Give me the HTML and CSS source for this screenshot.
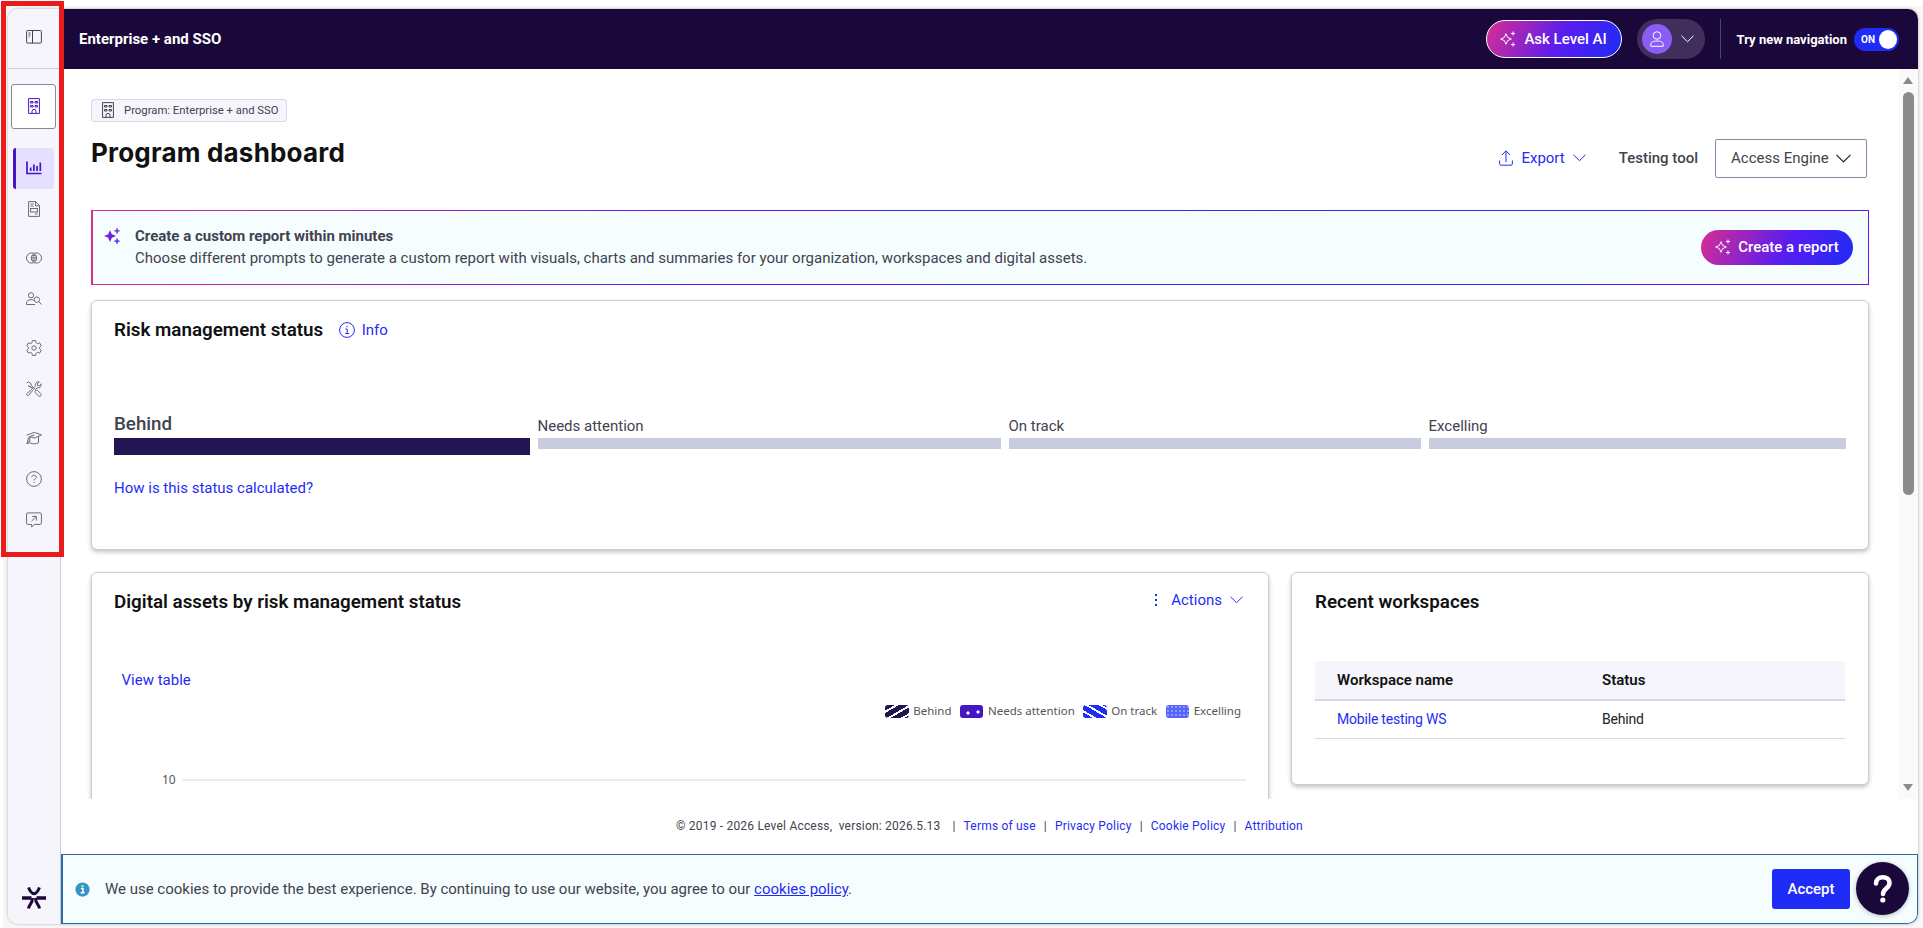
FILE: index.html
```
<!DOCTYPE html>
<html lang="en">
<head>
    <meta charset="UTF-8">
    <meta name="viewport" content="width=device-width, initial-scale=1.0">
    <title>Program dashboard</title>
    <link rel="stylesheet" href="styles.css">
</head>
<body>
    <div class="page">
        <div class="window">
            <nav class="sidebar">
                <button class="side-toggle">
                    <svg class="icon dark" viewBox="0 0 16 16"><rect x=".6" y="1.5" width="14.8" height="12.6" rx="1"/><path d="M6.5 1.5v12.6M2.5 4h2M2.5 6h2M2.5 8h1"/></svg>
                </button>
                <a class="side-program" href="#">
                    <svg class="icon purple" viewBox="0 0 16 16"><path d="M2.6.6h10.8v14.8H2.6zM6 15.4v-2a2 2 0 0 1 4 0v2"/><path d="M4.5 3.5h2.5v1.5H4.5zM9 3.5h2.5v1.5H9zM4.5 7.5h2.5v1.5H4.5zM9 7.5h2.5v1.5H9z"/></svg>
                </a>
                <div class="side-group">
                    <a class="side-item active" href="#">
                        <svg class="icon purple" viewBox="0 0 16 16"><path class="thick" d="M1 1.5v12h14.5"/><path class="thick" d="M4.7 11V7.5M7.9 11V4.5M11.1 11V6M14.3 11V2.5"/></svg>
                    </a>
                    <a class="side-item" href="#">
                        <svg class="icon" viewBox="0 0 16 16"><path d="M2.6.6h7l3.9 4v10.8H2.6zM9.5.6v4.2h4M4.5 3h3M4.5 5h3M9 13h2.5"/><rect x="4.6" y="7.5" width="6.8" height="3.5"/></svg>
                    </a>
                </div>
                <div class="side-group">
                    <a class="side-item" href="#">
                        <svg class="icon" viewBox="0 0 16 16"><circle cx="5.6" cy="8" r="5.1"/><circle cx="10.4" cy="8" r="5.1"/><path d="M6.3 5.5h3.4M5.5 7.2h5M5.5 8.9h5M6.3 10.6h3.4"/></svg>
                    </a>
                    <a class="side-item" href="#">
                        <svg class="icon" viewBox="0 0 16 16"><circle cx="5" cy="4.3" r="2.6"/><path d="M8 13.5H.6v-1.8c0-2 1.7-3 4.4-3 1 0 2 .2 2.7.6M9 13.5H8"/><circle cx="10.8" cy="8.6" r="2.7"/><path d="M12.8 10.6l2.7 2.9"/></svg>
                    </a>
                </div>
                <div class="side-group">
                    <a class="side-item" href="#">
                        <svg class="icon" viewBox="0 0 16 16"><circle cx="8" cy="8" r="2.2"/><path d="M6.4.6h3.2l.5 2.2 1.4.8 2.1-.7 1.6 2.8L13.6 7.2v1.6l1.6 1.5-1.6 2.8-2.1-.7-1.4.8-.5 2.2H6.4l-.5-2.2-1.4-.8-2.1.7L.8 10.3l1.6-1.5V7.2L.8 5.7l1.6-2.8 2.1.7 1.4-.8z"/></svg>
                    </a>
                    <a class="side-item" href="#">
                        <svg class="icon" viewBox="0 0 16 16"><path d="M.8 2.2L2.2.8l2.6 1.6.5 2 4.5 4.4M7.3 7.8L4.2 5.4l-1.9-.5zM9.2 9.8c1.2-1 2-.8 2.8 0l2.7 2.7c1.5 1.5-.8 3.8-2.3 2.3L9.7 12c-.8-.8-1-1.6-.5-2.2zM8.3 6.3l1-1.2C8.8 2.4 10.8.3 13.3.8l-2 2.2.3 1.5 1.6.3 1.9-2c.6 2.7-1.4 4.5-3.8 4L9.8 8M7.2 8.7l-4.6 5.8c-.8.9-2.6-.8-1.7-1.7L6 7.7"/></svg>
                    </a>
                </div>
                <div class="side-group">
                    <a class="side-item" href="#">
                        <svg class="icon" viewBox="0 0 16 16"><path d="M.6 5.2L8.5 2.3l6.9 2.6-6.9 3.2-4.8-1.5L8.5 5M3.7 6.8v6c2.5 1.4 6 1.4 8.8 0V6.4M3.7 6.6q-1.8.6-1.9 4.4M1.8 10.8l-1 2.8h1.6z"/></svg>
                    </a>
                    <a class="side-item" href="#">
                        <svg class="icon" viewBox="0 0 16 16"><circle cx="8" cy="8" r="7.4"/><path d="M5.7 6.2C5.7 3.7 10.3 3.7 10.3 6.2c0 1.7-2.3 1.6-2.3 3.3M8 10.9v1.1"/></svg>
                    </a>
                    <a class="side-item" href="#">
                        <svg class="icon" viewBox="0 0 16 16"><path d="M1.6.9h12.8q1 0 1 1v9.5q0 1-1 1H8.5L5.7 15v-2.6H1.6q-1 0-1-1V1.9q0-1 1-1zM5.5 9.2l4.7-4.6M6.2 4.4h4.2v4.2"/></svg>
                    </a>
                </div>
                <svg class="brand" viewBox="0 0 24 22"><path class="bars" d="M0 11h9.5M14.5 11H24"/><path d="M6.5.5C8 4.2 9.6 6.7 12 6.7S16 4.2 17.5.5M6.5 21.5c.8-4.5 4-5 4-10.500M17.500 21.500c-.8-4.500-4-5-4-10.500"/></svg>
            </nav>

            <div class="main">
                <header class="topbar">
                    <span class="org">Enterprise + and SSO</span>
                    <button class="ask">
                        <svg class="icon light" viewBox="0 0 16 16"><path d="M6 2.7l1.6 3.7L11.3 8 7.6 9.6 6 13.3 4.4 9.6.7 8l3.7-1.6zM13 .5v4M11 2.5h4M13 11.5v4M11 13.5h4"/></svg>
                        Ask Level AI
                    </button>
                    <button class="account">
                        <span class="avatar"><svg class="icon light" viewBox="0 0 16 16"><circle cx="8" cy="4.5" r="3.8"/><path d="M1.8 15.3v-1.8c0-2.7 2.7-3.5 6.2-3.5s6.2.8 6.2 3.5v1.8z"/></svg></span>
                        <svg class="chevron light" viewBox="0 0 13 8"><path d="M.5.8l6 5.9 6-5.9"/></svg>
                    </button>
                    <div class="new-nav">
                        <span>Try new navigation</span>
                        <span class="switch">ON<i></i></span>
                    </div>
                </header>

                <div class="content">
                    <div class="scroll">
                        <div class="crumb">
                            <svg class="icon dark" viewBox="0 0 16 16"><path d="M2.6.6h10.8v14.8H2.6zM6 15.4v-2a2 2 0 0 1 4 0v2"/><path d="M4.5 3.5h2.5v1.5H4.5zM9 3.5h2.5v1.5H9zM4.5 7.5h2.5v1.5H4.5zM9 7.5h2.5v1.5H9z"/></svg>
                            Program: Enterprise + and SSO
                        </div>
                        <div class="title-row">
                            <h1>Program dashboard</h1>
                            <button class="export">
                                <svg class="icon blue" viewBox="0 0 16 16"><path d="M1.6 10.5v3.2q0 1.5 1.5 1.5h9.8q1.5 0 1.5-1.5v-3.2M8 12V1M4 5l4-4.2L12 5"/></svg>
                                Export
                                <svg class="chevron blue" viewBox="0 0 13 8"><path d="M.5.8l6 5.9 6-5.9"/></svg>
                            </button>
                            <span class="tool-label">Testing tool</span>
                            <button class="select">
                                Access Engine
                                <svg class="chevron" viewBox="0 0 15 9"><path d="M.5.8l7 7 7-7"/></svg>
                            </button>
                        </div>

                        <section class="banner">
                            <svg class="spark" viewBox="0 0 16 16">
                                <defs><linearGradient id="g" x1="0" y1="0" x2="1" y2="1"><stop offset="0" stop-color="#d72e92"/><stop offset=".55" stop-color="#5a1cf0"/><stop offset="1" stop-color="#1f2cf5"/></linearGradient></defs>
                                <path fill="url(#g)" d="M6 2l1.8 4.2L12 8 7.8 9.8 6 14 4.2 9.8 0 8l4.2-1.8zM12.3.3h1.4v1.9h1.9v1.4h-1.9v1.9h-1.4V3.6h-1.9V2.2h1.9zM12.3 10.5h1.4v1.9h1.9v1.4h-1.9v1.9h-1.4v-1.9h-1.9v-1.4h1.9z"/>
                            </svg>
                            <div class="banner-text">
                                <strong>Create a custom report within minutes</strong>
                                <p>Choose different prompts to generate a custom report with visuals, charts and summaries for your organization, workspaces and digital assets.</p>
                            </div>
                            <button class="create">
                                <svg class="icon light" viewBox="0 0 16 16"><path d="M6 2.7l1.6 3.7L11.3 8 7.6 9.6 6 13.3 4.4 9.6.7 8l3.7-1.6zM13 .5v4M11 2.5h4M13 11.5v4M11 13.5h4"/></svg>
                                Create a report
                            </button>
                        </section>

                        <section class="card risk">
                            <div class="card-head">
                                <h2>Risk management status</h2>
                                <a class="info" href="#">
                                    <svg class="icon blue" viewBox="0 0 16 16"><circle cx="8" cy="8" r="7.4"/><path d="M6.5 7h1.7v4.5M6.3 11.5h3.7M8 4v1.3"/></svg>
                                    Info
                                </a>
                            </div>
                            <div class="levels">
                                <div class="level current"><span>Behind</span></div>
                                <div class="level"><span>Needs attention</span></div>
                                <div class="level"><span>On track</span></div>
                                <div class="level"><span>Excelling</span></div>
                            </div>
                            <a class="how" href="#">How is this status calculated?</a>
                        </section>

                        <div class="columns">
                            <section class="card assets">
                                <div class="card-head">
                                    <h2>Digital assets by risk management status</h2>
                                    <button class="actions">
                                        <svg class="dots" viewBox="0 0 4 12"><path d="M1 0h2v2H1zM1 5h2v2H1zM1 10h2v2H1z"/></svg>
                                        Actions
                                        <svg class="chevron blue" viewBox="0 0 13 8"><path d="M.5.8l6 5.9 6-5.9"/></svg>
                                    </button>
                                </div>
                                <a class="view-table" href="#">View table</a>
                                <div class="legend">
                                    <span><i class="swatch behind"></i>Behind</span>
                                    <span><i class="swatch attention"></i>Needs attention</span>
                                    <span><i class="swatch track"></i>On track</span>
                                    <span><i class="swatch excelling"></i>Excelling</span>
                                </div>
                                <div class="axis"><span>10</span><i></i></div>
                            </section>

                            <section class="card recent">
                                <h2>Recent workspaces</h2>
                                <table>
                                    <thead>
                                        <tr><th>Workspace name</th><th>Status</th></tr>
                                    </thead>
                                    <tbody>
                                        <tr><td><a href="#">Mobile testing WS</a></td><td>Behind</td></tr>
                                    </tbody>
                                </table>
                            </section>
                        </div>
                    </div>
                    <div class="scrollbar">
                        <i class="arrow up"></i>
                        <i class="thumb"></i>
                        <i class="arrow down"></i>
                    </div>
                </div>

                <footer>
                    <span>© 2019 - 2026 Level Access,&nbsp; version: 2026.5.13</span>
                    <b class="first">|</b><a href="#">Terms of use</a>
                    <b>|</b><a href="#">Privacy Policy</a>
                    <b>|</b><a href="#">Cookie Policy</a>
                    <b>|</b><a href="#">Attribution</a>
                </footer>

                <div class="cookies">
                    <svg class="cookie-icon" viewBox="0 0 16 16"><circle cx="8" cy="8" r="7.6"/><path d="M6.3 7h2.2v4.3M6 11.5h4.2M8 3.4v2"/></svg>
                    <p>We use cookies to provide the best experience. By continuing to use our website, you agree to our <a href="#">cookies policy</a>.</p>
                    <button class="accept">Accept</button>
                    <button class="help"><svg viewBox="0 0 20 30"><path d="M3 9.5C3 1.2 16.5 1 16.5 9c0 5.5-6.5 5.5-6.5 11"/><circle cx="9.8" cy="26" r="2.6"/></svg></button>
                </div>
            </div>
        </div>
    </div>
    <div class="highlight"></div>
</body>
</html>
```
FILE: styles.css
```
* {
    box-sizing: border-box;
}

body {
    margin: 0;
    padding: 6px 0 0 3px;
    height: 928px;
    overflow: hidden;
    background: #fff;
    color: #43424f;
    font-family: Roboto, "Liberation Sans", sans-serif;
    font-size: 15px;
}

h1, h2, p {
    margin: 0;
}

a {
    color: #1f2cf5;
    text-decoration: none;
}

button {
    display: flex;
    align-items: center;
    padding: 0;
    border: none;
    background: none;
    color: inherit;
    font: inherit;
    white-space: nowrap;
}

.icon {
    width: 16px;
    height: 16px;
    flex: none;
    fill: none;
    stroke: #6b697f;
    stroke-width: 1;
}

.icon .thick {
    stroke-width: 1.7;
}

.chevron {
    width: 13px;
    height: 8px;
    fill: none;
    stroke: #222;
    stroke-width: 1;
}

.icon.dark { stroke: #43424f; }
.icon.purple { stroke: #4416c4; }
.icon.light, .chevron.light { stroke: #fff; }
.icon.blue, .chevron.blue { stroke: #1f2cf5; }

.page {
    height: 922px;
    padding: 3px 5px 4px 5px;
    background: #f7f7f7;
}

.window {
    display: flex;
    height: 915px;
    border-radius: 10px;
    overflow: hidden;
    background: #fff;
    box-shadow: 0 0 3px rgba(0, 0, 0, 0.3);
}

/* sidebar */
.sidebar {
    display: flex;
    flex-direction: column;
    align-items: center;
    width: 53px;
    flex: none;
    padding-right: 1px;
    background: #f6f5fb;
    border-right: 1px solid #c9cbdf;
}

.side-toggle {
    width: 100%;
    height: 60px;
    flex: none;
    justify-content: center;
    padding-bottom: 4px;
    border-bottom: 1px solid #c9cbdf;
}

.side-program {
    display: flex;
    align-items: center;
    justify-content: center;
    width: 45px;
    height: 45px;
    margin: 15px 0 18.5px;
    padding-bottom: 2px;
    background: #fff;
    border: 1px solid #8986a5;
    border-radius: 3px;
}

.side-group {
    margin-bottom: 7.6px;
}

.side-item {
    display: flex;
    align-items: center;
    justify-content: center;
    width: 41px;
    height: 41.2px;
    padding-bottom: 1px;
    border-radius: 3px;
}

.side-item.active {
    background: #e6dfff;
    border-left: 3px solid #4416c4;
    padding-right: 3px;
}

.brand {
    width: 24px;
    height: 22px;
    margin: auto 0 15px;
    fill: none;
    stroke: #1b083a;
    stroke-width: 3;
}

.brand .bars {
    stroke-width: 3.6;
}

.main {
    display: flex;
    flex-direction: column;
    flex: 1;
    min-width: 0;
}

/* top bar */
.topbar {
    display: flex;
    align-items: center;
    height: 60px;
    padding: 0 19px 0 18px;
    background: #1b083a;
    color: #fff;
    font-weight: 500;
}

.org {
    flex: 1;
    font-size: 15px;
    font-weight: 700;
}

.ask {
    width: 136px;
    height: 38px;
    justify-content: center;
    gap: 8px;
    border: 1px solid #fff;
    border-radius: 19px;
    background: linear-gradient(115deg, #d72e92 0%, #5a1cf0 55%, #1f2cf5 100%);
    font-size: 15px;
}

.account {
    width: 68px;
    height: 40px;
    margin: 0 15px;
    padding-left: 5px;
    gap: 9px;
    border-radius: 20px;
    background: #402e5c;
}

.avatar {
    display: flex;
    align-items: center;
    justify-content: center;
    width: 30px;
    height: 30px;
    padding-left: 1px;
    border-radius: 50%;
    background: #8b5cf6;
}

.new-nav {
    display: flex;
    align-items: center;
    gap: 7px;
    height: 40px;
    padding-left: 16px;
    border-left: 1px solid #524463;
    font-size: 13px;
    font-weight: 700;
}

.switch {
    display: flex;
    align-items: center;
    justify-content: space-between;
    width: 45px;
    height: 23px;
    padding: 0 2px 0 7px;
    border-radius: 12px;
    background: #1f2cf5;
    font-size: 10px;
}

.switch i {
    width: 18px;
    height: 19px;
    border-radius: 50%;
    background: #fff;
}

/* scrolling area */
.content {
    display: flex;
    height: 730px;
}

.scroll {
    flex: 1;
    min-width: 0;
    padding: 30px 30px 0;
    overflow: hidden;
}

.scrollbar {
    display: flex;
    flex-direction: column;
    align-items: center;
    width: 19px;
    padding: 8px 1px 8px 0;
    background: #fafafa;
}

.arrow {
    border: 5px solid transparent;
}

.arrow.up {
    border-top: none;
    border-bottom: 7px solid #8b8b8b;
}

.arrow.down {
    margin-top: auto;
    border-bottom: none;
    border-top: 7px solid #8b8b8b;
}

.thumb {
    width: 11px;
    height: 403px;
    margin-top: 8px;
    border-radius: 6px;
    background: #8b8b8b;
}

.crumb {
    display: flex;
    align-items: center;
    gap: 8px;
    width: 196px;
    height: 23px;
    padding: 0 0 1px 8px;
    border: 1px solid #d6d6e4;
    border-radius: 3px;
    background: #f6f5fb;
    font-size: 11.3px;
    white-space: nowrap;
}

.title-row {
    display: flex;
    align-items: center;
    height: 88px;
    padding: 0 2px 16px 0;
}

h1 {
    flex: 1;
    margin-top: -11px;
    color: #111;
    font-family: Inter, Roboto, sans-serif;
    font-size: 26px;
    font-weight: 700;
    letter-spacing: 0.2px;
}

.export {
    gap: 8px;
    color: #1f2cf5;
}

.export .icon {
    margin-right: -1px;
}

.tool-label {
    margin: 0 17px 0 33px;
    font-weight: 500;
}

.select {
    width: 152px;
    height: 39px;
    justify-content: space-between;
    padding: 0 15px;
    border: 1px solid #8986a5;
    border-radius: 2px;
}

.select .chevron {
    width: 15px;
    height: 9px;
    stroke-width: 1.2;
}

.banner {
    display: flex;
    height: 75px;
    padding: 17px 15px 0 11px;
    border: 1px solid;
    border-left-width: 2px;
    border-image: linear-gradient(90deg, #d72e92, #5a1cf0 33%, #1f2cf5 66%, #5a1cf0) 1;
    background: #f5fdff;
}

.spark {
    width: 16px;
    height: 16px;
}

.banner-text {
    flex: 1;
    margin-left: 15px;
    line-height: 22px;
    margin-top: -3px;
}

.banner-text strong {
    font-weight: 700;
}

.create {
    width: 152px;
    height: 35px;
    margin-top: 2px;
    padding-bottom: 2px;
    justify-content: center;
    gap: 7px;
    border-radius: 18px;
    background: linear-gradient(115deg, #d72e92 0%, #5a1cf0 55%, #1f2cf5 100%);
    color: #fff;
    font-weight: 500;
}

.card {
    border: 1px solid #c9cbdf;
    border-radius: 6px;
    background: #fff;
    box-shadow: 0 2px 4px rgba(0, 0, 0, 0.25);
}

.card-head {
    display: flex;
    align-items: center;
}

h2 {
    color: #111;
    font-size: 18.8px;
    line-height: 24px;
    font-weight: 600;
}

.risk {
    height: 250px;
    margin-top: 15px;
    padding: 17px 22px 0;
}

.info {
    display: flex;
    align-items: center;
    gap: 7px;
    margin-left: 15.5px;
}

.levels {
    display: grid;
    grid-template-columns: 416px 463.5px 412.5px 417px;
    gap: 7.5px;
    margin-top: 71px;
}

.level span {
    display: flex;
    align-items: flex-end;
    height: 25px;
    padding-bottom: 3px;
}

.level::after {
    content: "";
    display: block;
    height: 11px;
    background: #c9cbdf;
}

.level.current span {
    font-size: 18.75px;
    font-weight: 500;
}

.level.current::after {
    height: 17px;
    background: #231452;
}

.how {
    display: block;
    margin-top: 24px;
}

.columns {
    display: grid;
    grid-template-columns: 1178px 578px;
    gap: 22px;
    margin-top: 22px;
    align-items: start;
}

.assets {
    height: 300px;
    padding: 17px 22px 0;
}

.assets h2 {
    flex: 1;
}

.actions {
    gap: 9px;
    padding: 0 3px 4px 0;
    color: #1f2cf5;
}

.actions .chevron {
    margin-left: -1px;
}

.dots {
    width: 4px;
    height: 12px;
    margin-right: 4px;
    fill: #1f2cf5;
}

.view-table {
    display: block;
    margin: 56px 0 0 7.5px;
    line-height: 20px;
}

.legend {
    display: flex;
    justify-content: flex-end;
    gap: 8.5px;
    margin: 13px 5px 0 0;
    font-family: "Noto Sans", sans-serif;
    font-size: 11.5px;
    line-height: 16px;
    color: #555;
}

.legend span {
    display: flex;
    align-items: center;
    gap: 4.5px;
}

.swatch {
    width: 23.5px;
    height: 13px;
    border-radius: 3px;
}

.swatch.behind {
    background: repeating-linear-gradient(150deg, #231452 0 5px, #fff 5px 7px);
}

.swatch.attention {
    background:
        radial-gradient(circle at 8px 8px, #fff 1.3px, transparent 1.9px),
        radial-gradient(circle at 18px 7px, #fff 1.3px, transparent 1.9px),
        #4416c4;
}

.swatch.track {
    background: repeating-linear-gradient(30deg, #1f2cf5 0 5px, #fff 5px 7px);
}

.swatch.excelling {
    background: radial-gradient(circle at 2px 2px, #b9beff 0.5px, transparent 1px) 0 0 / 4px 4px #5664fb;
}

.axis {
    display: flex;
    align-items: center;
    gap: 7px;
    margin: 53px 0 0 48px;
    font-family: "Noto Sans", sans-serif;
    font-size: 12px;
    line-height: 16px;
    color: #555;
}

.axis i {
    width: 1063px;
    height: 2px;
    background: #e9e9f0;
}

.recent {
    height: 213px;
    padding: 17px 23px 0;
}

table {
    width: 530px;
    margin-top: 47px;
    border-collapse: separate;
    border-spacing: 0;
    table-layout: fixed;
}

th, td {
    height: 38px;
    padding: 0 22px;
    text-align: left;
    border-bottom: 1px solid #d6d6e8;
    color: #222;
}

td {
    padding-bottom: 1px;
    font-size: 14px;
    letter-spacing: -0.2px;
}

th {
    height: 40px;
    border-bottom-width: 2px;
    background: #f6f5fb;
    color: #111;
    font-size: 15px;
    font-weight: 600;
}

/* bottom */
footer {
    display: flex;
    align-items: center;
    justify-content: center;
    height: 55px;
    padding-bottom: 2px;
    font-size: 12px;
    letter-spacing: 0.2px;
}

footer b {
    margin: 0 8px;
    font-weight: 400;
}

footer .first {
    margin-left: 12px;
}

.cookies {
    display: flex;
    align-items: center;
    height: 70px;
    padding: 0 8px 0 12px;
    border: 1px solid #2a6ba0;
    border-left-width: 2px;
    border-radius: 0 0 10px 0;
    background: #f5fdff;
}

.cookies p {
    flex: 1;
    margin-left: 15px;
    letter-spacing: -0.01px;
}

.cookies p a {
    text-decoration: underline;
}

.cookie-icon {
    width: 15px;
    height: 15px;
    fill: #3794c4;
    stroke: #fff;
    stroke-width: 1.7;
}

.cookie-icon circle {
    stroke: none;
}

.cookie-icon path {
    fill: none;
}

.accept {
    width: 78px;
    height: 40px;
    justify-content: center;
    border-radius: 3px;
    background: #1f2cf5;
    color: #fff;
    font-weight: 500;
}

.help {
    width: 53px;
    height: 53px;
    margin: 0 0 1px 6px;
    justify-content: center;
    border-radius: 50%;
    background: #1b083a;
    box-shadow: 0 1px 5px rgba(0, 0, 0, 0.25);
}

.help svg {
    width: 20px;
    height: 30px;
    fill: none;
    stroke: #fff;
    stroke-width: 4.5;
    stroke-linecap: round;
}

.help circle {
    fill: #fff;
    stroke: none;
}

/* red frame drawn over the sidebar */
.highlight {
    position: absolute;
    left: 1px;
    top: 1px;
    width: 63px;
    height: 556px;
    border: 5px solid #e91b1b;
}
```
